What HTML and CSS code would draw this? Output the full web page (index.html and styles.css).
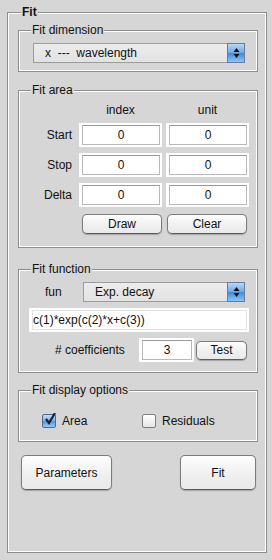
FILE: index.html
```html
<!DOCTYPE html>
<html>
<head>
  <title>Fit</title>
  <meta charset="UTF-8">
  <link rel="stylesheet" href="styles.css">
</head>
<body>
  <div class="frame">
    <div class="frame-title">Fit</div>

    <div class="panel dim">
      <div class="legend">Fit dimension</div>
      <div class="popup wide">
        <span class="popup-text">x&nbsp;&nbsp;---&nbsp;&nbsp;wavelength</span>
        <span class="stepper">
          <svg width="7" height="12" viewBox="0 0 7 12"><path d="M3.5 1 L6.5 5 L0.5 5 Z M3.5 11 L6.5 7 L0.5 7 Z" fill="#111"/></svg>
        </span>
      </div>
    </div>

    <div class="panel area">
      <div class="legend">Fit area</div>
      <div class="area-grid">
        <span></span>
        <span class="head">index</span>
        <span class="head">unit</span>

        <span class="row-label">Start</span>
        <div class="edit"><div class="edit-in">0</div></div>
        <div class="edit"><div class="edit-in">0</div></div>

        <span class="row-label">Stop</span>
        <div class="edit"><div class="edit-in">0</div></div>
        <div class="edit"><div class="edit-in">0</div></div>

        <span class="row-label">Delta</span>
        <div class="edit"><div class="edit-in">0</div></div>
        <div class="edit"><div class="edit-in">0</div></div>

        <span></span>
        <button class="btn draw">Draw</button>
        <button class="btn clear">Clear</button>
      </div>
    </div>

    <div class="panel func">
      <div class="legend">Fit function</div>
      <div class="fun-row">
        <span class="fun-label">fun</span>
        <div class="popup narrow">
          <span class="popup-text">Exp. decay</span>
          <span class="stepper">
            <svg width="7" height="12" viewBox="0 0 7 12"><path d="M3.5 1 L6.5 5 L0.5 5 Z M3.5 11 L6.5 7 L0.5 7 Z" fill="#111"/></svg>
          </span>
        </div>
      </div>
      <div class="edit formula"><div class="edit-in left">c(1)*exp(c(2)*x+c(3))</div></div>
      <div class="coef-row">
        <span class="coef-label"># coefficients</span>
        <div class="edit coef"><div class="edit-in">3</div></div>
        <button class="btn test">Test</button>
      </div>
    </div>

    <div class="panel opts">
      <div class="legend">Fit display options</div>
      <div class="check-row">
        <label class="check">
          <span class="box on">
            <svg width="12" height="12" viewBox="0 0 12 12"><path d="M2 6 L5 10 L11 0" stroke="#1a2330" stroke-width="2.2" fill="none"/></svg>
          </span>
          Area
        </label>
        <label class="check">
          <span class="box"></span>
          Residuals
        </label>
      </div>
    </div>

    <div class="actions">
      <button class="btn big params">Parameters</button>
      <button class="btn big fit">Fit</button>
    </div>
  </div>
</body>
</html>
```

FILE: styles.css
```css
body {
  margin: 0;
  background: #d6d6d6;
  font-family: 'Liberation Sans', Arial, sans-serif;
  font-size: 12px;
  color: #111;
}

.frame {
  box-sizing: border-box;
  margin: 12px 0 0 7px;
  width: 260px;
  height: 541px;
  border: 1px solid #8e8e8e;
  box-shadow: inset 0 0 0 1px #fff;
}

.frame-title,
.legend {
  width: fit-content;
  height: 14px;
  line-height: 14px;
  padding: 0 1px;
  background: #d6d6d6;
}

.frame-title {
  margin: -8px 0 0 13px;
  font-weight: bold;
}

.legend {
  margin: -8px 0 0 12px;
}

.panel {
  box-sizing: border-box;
  margin-left: 10px;
  width: 240px;
  border: 1px solid #8e8e8e;
  box-shadow: inset 0 0 0 1px #fff;
}

.dim { margin-top: 11px; height: 42px; }
.area { margin-top: 18px; height: 158px; }
.func { margin-top: 21px; height: 104px; }
.opts { margin-top: 17px; height: 52px; }

/* popup menus */
.popup {
  box-sizing: border-box;
  display: flex;
  align-items: center;
  height: 20px;
  border: 1px solid #9c9c9c;
  background: linear-gradient(#ececec, #e2e2e2);
}

.popup.wide {
  margin: 6px 0 0 14px;
  width: 212px;
}

.popup.narrow {
  width: 162px;
}

.popup-text {
  flex: 1;
  padding-left: 11px;
}

.stepper {
  box-sizing: border-box;
  width: 18px;
  height: 20px;
  margin: -1px -1px -1px 0;
  display: flex;
  align-items: center;
  justify-content: center;
  border: 1px solid #6b7aa0;
  background: linear-gradient(#b9d8f5, #6aa8e6 50%, #3f8ad9 51%, #8ec4f4);
}

/* edit boxes */
.edit {
  box-sizing: border-box;
  height: 24px;
  padding: 2px 2px 2px 3px;
  background: #fff;
}

.edit-in {
  box-sizing: border-box;
  height: 20px;
  line-height: 18px;
  border: 1px solid #b9b9b9;
  border-top-color: #9a9a9a;
  text-align: center;
}

.edit-in.left {
  text-align: left;
  padding-left: 0;
}

.formula .edit-in {
  border-color: #e4e4e4;
}

/* fit area grid */
.area-grid {
  display: grid;
  grid-template-columns: 56px 83px 83px;
  grid-template-rows: 14px 24px 24px 24px 20px;
  column-gap: 4px;
  row-gap: 6px;
  margin-top: 6px;
}

.head {
  text-align: center;
  line-height: 14px;
}

.row-label {
  text-align: right;
  padding-right: 3px;
  line-height: 24px;
}

/* buttons */
.btn {
  box-sizing: border-box;
  font-family: inherit;
  font-size: 12px;
  color: #111;
  padding: 0;
  border: 1px solid #7c7c7c;
  border-bottom-color: #5e5e5e;
  border-radius: 5px;
  background: linear-gradient(#fdfdfd, #efefef 60%, #e9e9e9);
  box-shadow: 0 1px 1px rgba(0, 0, 0, 0.25);
}

.draw,
.clear {
  width: 80px;
  height: 20px;
  margin-top: 1px;
  line-height: 16px;
}

.draw { margin-left: 3px; }
.clear { margin-left: 1px; }

/* fit function */
.fun-row {
  display: flex;
  align-items: center;
  margin-top: 6px;
}

.fun-label {
  box-sizing: border-box;
  width: 64px;
  padding-left: 26px;
}

.formula {
  margin: 6px 0 0 10px;
  width: 220px;
}

.coef-row {
  display: flex;
  align-items: center;
  margin-top: 6px;
}

.coef-label {
  width: 84px;
  margin-left: 36px;
}

.coef {
  width: 55px;
}

.test {
  width: 51px;
  height: 19px;
  margin-left: 2px;
  line-height: 15px;
}

/* display options */
.check-row {
  display: flex;
  margin: 16px 0 0 23px;
}

.check {
  display: flex;
  align-items: center;
  gap: 6px;
  width: 100px;
  height: 15px;
}

.box {
  box-sizing: border-box;
  width: 14px;
  height: 14px;
  border: 1px solid #7d7d7d;
  border-radius: 2px;
  background: linear-gradient(#ffffff, #e4e4e4);
  display: flex;
  align-items: center;
  justify-content: center;
}

.box.on {
  border-color: #50678e;
  background: linear-gradient(#c4dff7, #76b0e9 50%, #4d93dc 51%, #9ccaf3);
}

.box svg {
  margin: -3px -2px 0 0;
}

/* bottom buttons */
.actions {
  display: flex;
  justify-content: space-between;
  margin: 13px 0 0 13px;
  width: 235px;
}

.big {
  height: 35px;
}

.params { width: 91px; }
.fit { width: 76px; }
```
